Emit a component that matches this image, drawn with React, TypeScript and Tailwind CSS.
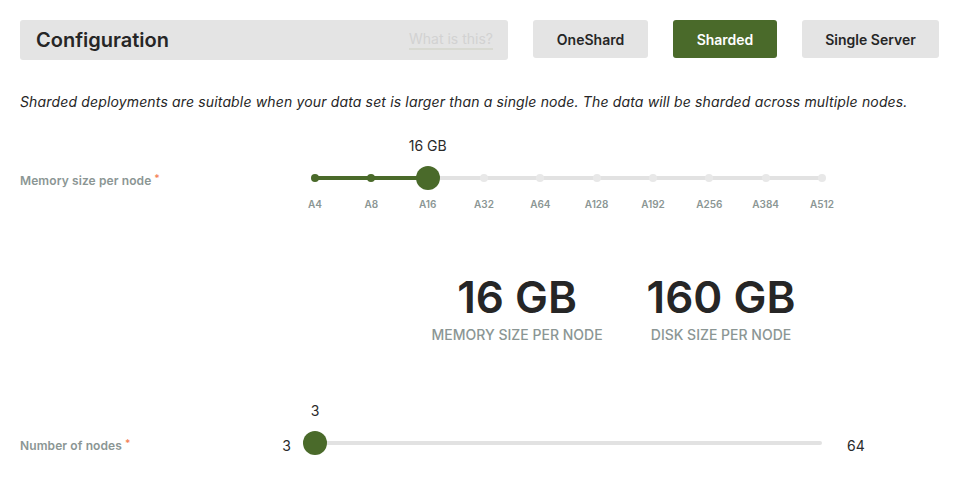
import React from "react";

const SIZES = ["A4", "A8", "A16", "A32", "A64", "A128", "A192", "A256", "A384", "A512"];
const MODES = [
  { name: "OneShard", w: "w-[115px]" },
  { name: "Sharded", w: "w-[104px]" },
  { name: "Single Server", w: "w-[137px]" },
];

function Label({ text }: { text: string }) {
  return (
    <div className="w-[275px] shrink-0 pl-5 pt-[5px] text-[12px] font-semibold tracking-[0.1px] text-[#8b9694]">
      {text}
      <span className="ml-[3px] align-top text-[10px] leading-[12px] text-[#f4855a]">*</span>
    </div>
  );
}

function StepSlider() {
  const selected = 2;
  const pct = (i: number) => (i / (SIZES.length - 1)) * 100;
  return (
    <div className="w-[531px] px-3">
      <div className="relative h-6">
        <div className="absolute left-0 right-0 top-[10px] h-1 rounded-full bg-[#e2e2e2]" />
        <div
          className="absolute left-0 top-[10px] h-1 bg-[#4a6a2a]"
          style={{ width: `${pct(selected)}%` }}
        />
        {SIZES.map((s, i) => (
          <React.Fragment key={s}>
            <div
              className={`absolute top-2 h-2 w-2 -translate-x-1/2 rounded-full ${
                i <= selected ? "bg-[#4a6a2a]" : "bg-[#e8e8e8]"
              }`}
              style={{ left: `${pct(i)}%` }}
            />
            <div
              className="absolute top-[31px] -translate-x-1/2 text-[10px] font-semibold text-[#8b9694]"
              style={{ left: `${pct(i)}%` }}
            >
              {s}
            </div>
          </React.Fragment>
        ))}
        <div
          className="absolute top-0 h-6 w-6 -translate-x-1/2 rounded-full bg-[#4a6a2a]"
          style={{ left: `${pct(selected)}%` }}
        />
        <div
          className="absolute top-[-30px] -translate-x-1/2 whitespace-nowrap text-[14px] leading-5 text-[#2a2a2a]"
          style={{ left: `${pct(selected)}%` }}
        >
          16 GB
        </div>
      </div>
    </div>
  );
}

function Stat({ value, label }: { value: string; label: string }) {
  return (
    <div className="flex flex-col items-center">
      <div className="text-[44px] font-semibold leading-[48px] text-[#262626]">{value}</div>
      <div className="mt-1 text-[14px] font-medium leading-5 uppercase text-[#8b9694]">{label}</div>
    </div>
  );
}

export default function App() {
  return (
    <div className="h-[481px] w-[977px] bg-white font-['Inter',sans-serif] text-[#262626]">
      <div className="flex items-start gap-[25px] px-5 pt-5">
        <div className="flex h-10 w-[488px] items-center justify-between rounded-[3px] bg-[#e4e4e4] pl-4 pr-[15px]">
          <h1 className="text-[20px] font-semibold text-[#262626]">Configuration</h1>
          <a className="border-b-2 border-[#d8d9d2] text-[14px] leading-[18px] text-[#d2d2d2]">
            What is this?
          </a>
        </div>
        {MODES.map((m) => {
          const active = m.name === "Sharded";
          return (
            <button
              key={m.name}
              className={`h-[38px] rounded-[3px] text-[14px] font-semibold ${m.w} ${
                active ? "bg-[#4a6a2a] text-white" : "bg-[#e4e4e4] text-[#262626]"
              }`}
            >
              {m.name}
            </button>
          );
        })}
      </div>

      <p className="mt-8 px-5 text-[14px] leading-5 tracking-[0.15px] italic text-[#262626]">
        Sharded deployments are suitable when your data set is larger than a single node. The data
        will be sharded across multiple nodes.
      </p>

      <div className="mt-[54px] flex items-center">
        <Label text="Memory size per node" />
        <div className="w-[28px]" />
        <StepSlider />
      </div>

      <div className="mt-[83px] flex justify-center gap-[44px] pl-[250px]">
        <Stat value="16 GB" label="Memory size per node" />
        <Stat value="160 GB" label="Disk size per node" />
      </div>

      <div className="mt-[85px] flex items-center">
        <Label text="Number of nodes" />
        <div className="w-[28px] pr-3 pt-[5px] text-right text-[14px] text-[#2a2a2a]">3</div>
        <div className="w-[531px] px-3">
          <div className="relative h-6">
            <div className="absolute left-0 right-0 top-[10px] h-1 rounded-full bg-[#e2e2e2]" />
            <div className="absolute left-0 top-0 h-6 w-6 -translate-x-1/2 rounded-full bg-[#4a6a2a]" />
            <div className="absolute left-0 top-[-30px] -translate-x-1/2 text-[14px] leading-5 text-[#2a2a2a]">
              3
            </div>
          </div>
        </div>
        <div className="pl-[13px] pt-[5px] text-[14px] text-[#2a2a2a]">64</div>
      </div>
    </div>
  );
}
